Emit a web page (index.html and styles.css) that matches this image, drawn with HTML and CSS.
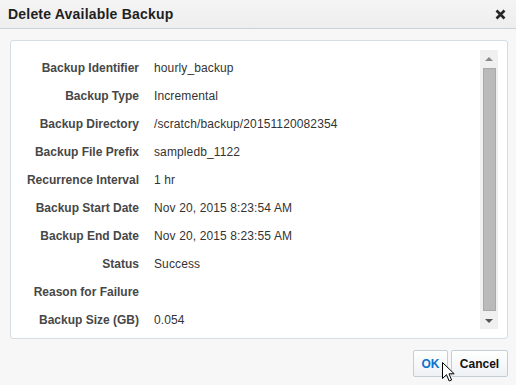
FILE: index.html
```html
<!DOCTYPE html>
<html>
<head>
<meta charset="utf-8">
<link rel="stylesheet" href="styles.css">
</head>
<body>
<div class="dialog">
  <div class="header">
    <span class="title">Delete Available Backup</span>
    <svg class="close" width="11" height="11" viewBox="0 0 11 11"><path d="M1.5 1.5 L9.5 9.5 M9.5 1.5 L1.5 9.5" stroke="#262626" stroke-width="2.6"/></svg>
  </div>
  <div class="content">
    <div class="panel">
      <div class="rows">
        <div class="row"><span class="label">Backup Identifier</span><span class="value">hourly_backup</span></div>
        <div class="row"><span class="label">Backup Type</span><span class="value">Incremental</span></div>
        <div class="row"><span class="label">Backup Directory</span><span class="value">/scratch/backup/20151120082354</span></div>
        <div class="row"><span class="label">Backup File Prefix</span><span class="value">sampledb_1122</span></div>
        <div class="row"><span class="label">Recurrence Interval</span><span class="value">1 hr</span></div>
        <div class="row"><span class="label">Backup Start Date</span><span class="value">Nov 20, 2015 8:23:54 AM</span></div>
        <div class="row"><span class="label">Backup End Date</span><span class="value">Nov 20, 2015 8:23:55 AM</span></div>
        <div class="row"><span class="label">Status</span><span class="value">Success</span></div>
        <div class="row"><span class="label">Reason for Failure</span><span class="value"></span></div>
        <div class="row"><span class="label">Backup Size (GB)</span><span class="value">0.054</span></div>
      </div>
      <div class="scrollbar">
        <div class="arrow up"></div>
        <div class="thumb"></div>
        <div class="arrow down"></div>
      </div>
    </div>
    <div class="buttons">
      <button class="btn ok">OK</button>
      <button class="btn cancel">Cancel</button>
      <svg class="cursor" width="13" height="20" viewBox="0 0 13 20"><path d="M0.5 0.5 L0.5 16.5 L4.5 12.7 L7.2 19 L9.6 18 L7 11.8 L12.2 11.8 Z" fill="#fff" stroke="#000" stroke-width="1" stroke-linejoin="miter"/></svg>
    </div>
  </div>
</div>
</body>
</html>
```
FILE: styles.css
```css
html, body {
  margin: 0;
  padding: 0;
}
body {
  width: 516px;
  height: 385px;
  background: #f7f7f7;
  font-family: "Liberation Sans", Arial, sans-serif;
  font-size: 12px;
  color: #333;
  overflow: hidden;
}
.dialog {
  display: flex;
  flex-direction: column;
  height: 385px;
}
.header {
  height: 29px;
  box-sizing: border-box;
  border-bottom: 1px solid #c9d1d9;
  background: linear-gradient(#f4f4f4, #eeeeee);
  display: flex;
  align-items: center;
  justify-content: space-between;
  padding: 0 10px 1px 8px;
}
.title {
  font-size: 14px;
  font-weight: bold;
  color: #1f1f1f;
  letter-spacing: 0.2px;
}
.close {
  display: block;
  margin-top: 1px;
}
.content {
  padding: 11px 8px 0 10px;
}
.panel {
  height: 299px;
  box-sizing: border-box;
  border: 1px solid #d3dde5;
  border-radius: 3px;
  background: #fff;
  display: flex;
  justify-content: space-between;
  padding: 9px 9px 9px 0;
}
.rows {
  padding-top: 4px;
}
.row {
  height: 28px;
  display: flex;
  align-items: center;
}
.label {
  width: 128px;
  text-align: right;
  font-weight: bold;
  color: #474747;
}
.value {
  margin-left: 15px;
  color: #333;
  letter-spacing: 0.12px;
}
.scrollbar {
  width: 18px;
  background: #f0f0f0;
  display: flex;
  flex-direction: column;
  align-items: center;
}
.arrow {
  height: 18px;
  width: 18px;
  position: relative;
}
.arrow.up::after, .arrow.down::after {
  content: "";
  position: absolute;
  left: 5px;
  width: 0;
  height: 0;
  border-left: 4px solid transparent;
  border-right: 4px solid transparent;
}
.arrow.up::after {
  top: 7px;
  border-bottom: 4px solid #8a8a8a;
}
.arrow.down::after {
  top: 8px;
  border-top: 4px solid #555;
}
.thumb {
  flex: 1;
  width: 13px;
  box-sizing: border-box;
  background: #bababa;
  border: 1px solid #a9a9a9;
}
.buttons {
  display: flex;
  justify-content: flex-end;
  gap: 3px;
  padding-top: 11px;
  position: relative;
}
.btn {
  height: 27px;
  box-sizing: border-box;
  border: 1px solid #c5cdd4;
  border-radius: 2px;
  background: linear-gradient(#ffffff, #eef1f4);
  font-family: "Liberation Sans", Arial, sans-serif;
  font-size: 12px;
  font-weight: bold;
  color: #111;
  padding: 0;
  margin: 0;
}
.btn.ok {
  width: 35px;
  color: #0a72d0;
}
.btn.cancel {
  width: 57px;
}
.cursor {
  position: absolute;
  left: 432px;
  top: 23px;
}
```
